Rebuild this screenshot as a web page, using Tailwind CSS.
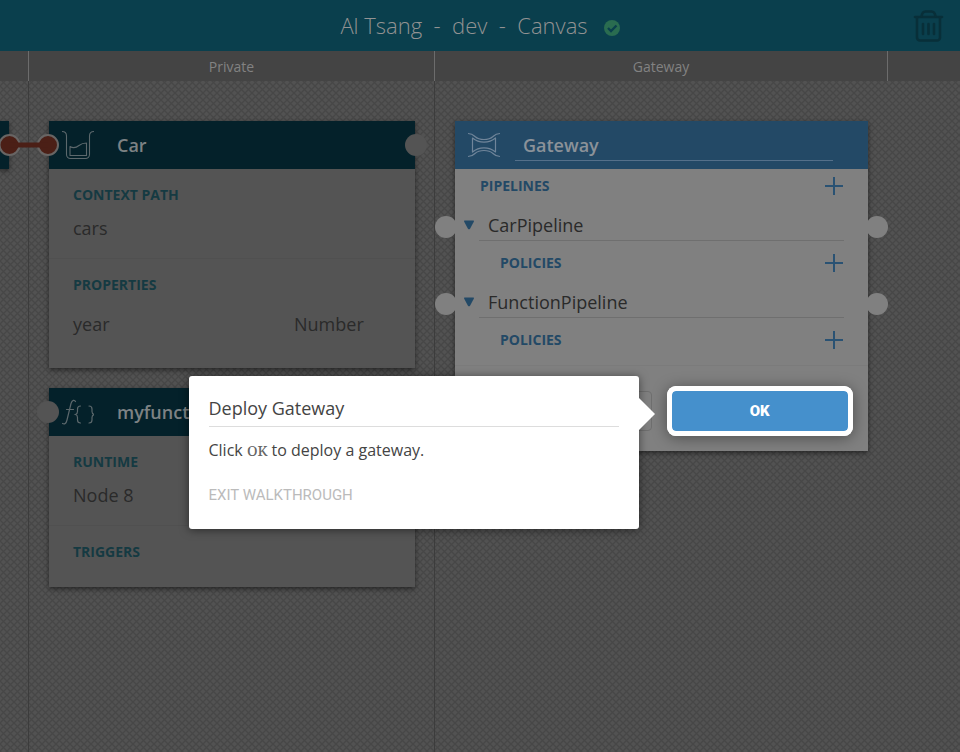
<!DOCTYPE html>
<html lang="en">
<head>
<meta charset="utf-8">
<meta name="viewport" content="width=device-width, initial-scale=1">
<title>Al Tsang - dev - Canvas</title>
<script src="https://cdn.jsdelivr.net/npm/@tailwindcss/browser@4"></script>
</head>
<body class="flex min-h-screen flex-col overflow-hidden bg-[#505050] font-['Open_Sans',sans-serif] text-[#2a2a2a]">

<header class="flex h-[51px] shrink-0 items-center bg-[#0a3f4d] px-4">
  <div class="flex-1"></div>
  <div class="flex items-center gap-4">
    <h1 class="text-[22px] font-light text-[#929292]">Al Tsang&nbsp; -&nbsp; dev&nbsp; -&nbsp; Canvas</h1>
    <svg class="mt-1 size-4" viewBox="0 0 16 16" role="img" aria-label="Saved">
      <circle cx="8" cy="8" r="8" fill="#2a6c50"/>
      <path d="M4 8l3 3 5.500-5.500" fill="none" stroke="#0a3f4d" stroke-width="2.300"/>
    </svg>
  </div>
  <div class="flex flex-1 justify-end">
    <button type="button" aria-label="Delete" class="text-[#082f39]">
      <svg class="h-8 w-8" viewBox="0 0 32 32" fill="none" stroke="currentColor" stroke-width="2.600" stroke-linecap="round">
        <path d="M3 7h27"/>
        <path d="M9.500 6.500C10 3 11.500 1.500 13.500 1.500h6c2 0 3.500 1.500 4 5"/>
        <path d="M5 8v19.500a3 3 0 0 0 3 3h17a3 3 0 0 0 3-3V8"/>
        <path d="M11 14v10M16.500 14v10M22 14v10"/>
      </svg>
    </button>
  </div>
</header>

<main class="relative grid flex-1 grid-cols-[28fr_406fr_453fr_73fr] grid-rows-[30px_1fr]">
  <svg class="absolute inset-0 h-full w-full" aria-hidden="true">
    <defs>
      <pattern id="weave" width="7" height="7" patternUnits="userSpaceOnUse">
        <rect width="7" height="7" fill="#525252"/>
        <path d="M-1-1l9 9M-1 8l9-9" stroke="#474747" stroke-width="1.400"/>
      </pattern>
    </defs>
    <rect width="100%" height="100%" fill="url(#weave)"/>
  </svg>

  <div class="relative bg-[#444]"></div>
  <h2 class="relative border-l border-[#6c6c6c] bg-[#444] text-center text-sm leading-8 text-[#828282]">Private</h2>
  <h2 class="relative border-l border-[#6c6c6c] bg-[#444] text-center text-sm leading-8 text-[#828282]">Gateway</h2>
  <div class="relative border-l border-[#6c6c6c] bg-[#444]"></div>

  <section class="relative pt-10">
    <div class="mr-[19px] h-12 bg-[#04212a] shadow-[0_2px_5px_rgba(0,0,0,0.5)]"></div>
  </section>

  <section class="relative flex flex-col gap-5 border-l border-[#3c3c3c] pt-10 pr-[19px] pl-5">
    <article class="relative bg-[#545454] shadow-[0_2px_5px_rgba(0,0,0,0.5)]">
      <header class="flex h-12 items-center bg-[#04212a] pl-[13px]">
        <svg class="h-8 w-8" viewBox="0 0 32 32" fill="none" stroke="#5c686c" stroke-width="1.100" stroke-linejoin="round">
          <path d="M0 2.500c3 0 4.500 1.500 4.500 4.500v18.500a4 4 0 0 0 4 4h15a4 4 0 0 0 4-4V7c0-3 1.500-4.500 4.500-4.500"/>
          <path d="M8 17.500c4 2.500 6.500 1 9-1s4.500-2.500 7.500-2.500v12.500H8z"/>
        </svg>
        <h3 class="ml-[23px] text-lg font-semibold text-[#7d8284]">Car</h3>
      </header>
      <div class="h-[90px] border-b border-[#505050] px-6 pt-4">
        <h4 class="text-sm font-bold text-[#153a42]">CONTEXT PATH</h4>
        <p class="mt-[9px] text-lg">cars</p>
      </div>
      <div class="h-[109px] px-6 pt-4">
        <h4 class="text-sm font-bold text-[#153a42]">PROPERTIES</h4>
        <p class="mt-[15px] grid grid-cols-[221fr_97fr] text-lg"><span>year</span><span>Number</span></p>
      </div>
      <span class="absolute top-[13px] -right-3 size-[22px] rounded-full bg-[#545454]"></span>
      <svg class="absolute top-3 -left-[51px] h-6 w-16" viewBox="0 0 64 24">
        <circle cx="11.500" cy="12" r="10" fill="#4b1f16" stroke="#686564" stroke-width="2"/>
        <circle cx="50" cy="12" r="10" fill="#4b1f16" stroke="#686564" stroke-width="2"/>
        <path d="M11 12h39" stroke="#4b1f16" stroke-width="5"/>
      </svg>
    </article>

    <article class="relative bg-[#545454] shadow-[0_2px_5px_rgba(0,0,0,0.5)]">
      <header class="flex h-12 items-center bg-[#04212a] pl-[13px]">
        <svg class="h-8 w-8" viewBox="0 0 32 32" fill="none" stroke="#5c686c" stroke-width="1.200" stroke-linecap="round">
          <path d="M13.500 5.500C12.500 3.500 10 4 9 7.500L5 24c-.8 3.500-2.500 4.500-4.500 3.500M4.500 13.500h7"/>
          <path d="M18.500 10c-2.500 0-3 1-3 3v2.500c0 1.500-.5 2.500-2 3 1.500.5 2 1.500 2 3V24c0 2 .5 3 3 3"/>
          <path d="M27 10c2.500 0 3 1 3 3v2.500c0 1.500.5 2.500 2 3-1.500.5-2 1.500-2 3V24c0 2-.5 3-3 3"/>
        </svg>
        <h3 class="ml-[23px] text-lg font-semibold text-[#7d8284]">myfunction</h3>
      </header>
      <div class="h-[90px] border-b border-[#505050] px-6 pt-4">
        <h4 class="text-sm font-bold text-[#153a42]">RUNTIME</h4>
        <p class="mt-[9px] text-lg">Node 8</p>
      </div>
      <div class="h-[61px] px-6 pt-4">
        <h4 class="text-sm font-bold text-[#153a42]">TRIGGERS</h4>
      </div>
      <span class="absolute top-[13px] -left-3 size-[22px] rounded-full bg-[#545454]"></span>
    </article>
  </section>

  <section class="relative border-l border-[#3c3c3c] pt-10 pr-[19px] pl-5">
    <article class="relative bg-[#808080] shadow-[0_2px_5px_rgba(0,0,0,0.5)]">
      <header class="flex h-12 items-center bg-[#234966] pr-[35px] pl-[13px]">
        <svg class="h-8 w-8 shrink-0" viewBox="0 0 32 32" fill="none" stroke="#70859a" stroke-width="1.200" stroke-linejoin="round">
          <path d="M0 4.500c4 0 5 1 7 3 4.500 4 13.500 4 18 0 2-2 3-3 7-3"/>
          <path d="M0 27.500c4 0 5-1 7-3 4.500-4 13.500-4 18 0 2 2 3 3 7 3"/>
          <path d="M4.500 9c6.500 5.500 16.500 5.500 23 0v14c-6.500-5.500-16.500-5.500-23 0z"/>
        </svg>
        <input aria-label="Gateway name" value="Gateway" class="ml-[15px] h-8 min-w-0 flex-1 border-b border-[#54708a] px-2 text-lg font-semibold text-[#8b9299]">
      </header>

      <div class="flex h-[34px] items-center justify-between pr-6 pl-[25px]">
        <h4 class="text-sm font-bold text-[#234966]">PIPELINES</h4>
        <button type="button" aria-label="Add pipeline" class="text-[#2a5273]"><svg class="size-5" viewBox="0 0 20 20" stroke="currentColor" stroke-width="2"><path d="M1 10h18M10 1v18"/></svg></button>
      </div>

      <div class="relative flex h-[38px] items-stretch pr-6 pl-2">
        <button type="button" aria-label="Collapse CarPipeline" class="mr-1 w-3 text-[#234966]"><svg class="mt-1.5 h-3 w-3" viewBox="0 0 12 12" fill="currentColor"><path d="M1.800 1.500h8.400q1.300 0 .6 1.300L7.200 9.400Q6 11.200 4.800 9.400L1.200 2.800Q.5 1.500 1.800 1.500z"/></svg></button>
        <input aria-label="Pipeline name" value="CarPipeline" class="min-w-0 flex-1 border-b border-[#6f6f6f] pt-1.5 pl-[9px] text-lg">
        <span class="absolute top-[13px] -left-5 size-[22px] rounded-full bg-[#808080]"></span>
        <span class="absolute top-[13px] -right-5 size-[22px] rounded-full bg-[#808080]"></span>
      </div>
      <div class="flex h-[39px] items-center justify-between pt-[5px] pr-6 pl-[45px]">
        <h4 class="text-sm font-bold text-[#234966]">POLICIES</h4>
        <button type="button" aria-label="Add policy" class="text-[#2a5273]"><svg class="size-5" viewBox="0 0 20 20" stroke="currentColor" stroke-width="2"><path d="M1 10h18M10 1v18"/></svg></button>
      </div>

      <div class="relative flex h-[38px] items-stretch pr-6 pl-2">
        <button type="button" aria-label="Collapse FunctionPipeline" class="mr-1 w-3 text-[#234966]"><svg class="mt-1.5 h-3 w-3" viewBox="0 0 12 12" fill="currentColor"><path d="M1.800 1.500h8.400q1.300 0 .6 1.300L7.200 9.400Q6 11.200 4.800 9.400L1.200 2.800Q.5 1.500 1.800 1.500z"/></svg></button>
        <input aria-label="Pipeline name" value="FunctionPipeline" class="min-w-0 flex-1 border-b border-[#6f6f6f] pt-1.5 pl-[9px] text-lg">
        <span class="absolute top-[13px] -left-5 size-[22px] rounded-full bg-[#808080]"></span>
        <span class="absolute top-[13px] -right-5 size-[22px] rounded-full bg-[#808080]"></span>
      </div>
      <div class="flex h-[39px] items-center justify-between pt-[5px] pr-6 pl-[45px]">
        <h4 class="text-sm font-bold text-[#234966]">POLICIES</h4>
        <button type="button" aria-label="Add policy" class="text-[#2a5273]"><svg class="size-5" viewBox="0 0 20 20" stroke="currentColor" stroke-width="2"><path d="M1 10h18M10 1v18"/></svg></button>
      </div>

      <footer class="mt-2 grid grid-cols-2 gap-5 border-t border-[#7b7b7b] px-5 pt-[25px] pb-5">
        <button type="button" class="h-10 rounded-sm border border-[#6f6f6f] text-sm font-bold text-[#4a4a4a]">CANCEL</button>
        <div class="relative">
          <button type="button" class="h-10 w-full rounded-sm bg-[#4590cc] font-['Roboto',sans-serif] text-[15px] font-black text-white shadow-[0_0_0_5px_#fff,0_2px_15px_5px_rgba(0,0,0,0.4)] outline-5 outline-white">OK</button>
          <div role="dialog" aria-labelledby="tour-title" class="absolute -top-[15px] right-[calc(100%+33px)] w-[450px] rounded-[3px] bg-white px-5 pt-5 pb-[22px] text-[#444] shadow-[0_1px_10px_rgba(0,0,0,0.5)]">
            <h2 id="tour-title" class="border-b border-[#ddd] pb-1.5 text-lg leading-6">Deploy Gateway</h2>
            <p class="mt-[11px] text-base leading-6">Click <code class="font-['Noto_Serif','DejaVu_Serif',serif] text-sm font-medium text-[#666]">OK</code> to deploy a gateway.</p>
            <button type="button" class="mt-[21px] block font-['Roboto',sans-serif] text-[15px] leading-6 text-[#bbb]">EXIT WALKTHROUGH</button>
            <svg class="absolute top-[22px] left-full h-8 w-4" viewBox="0 0 16 32" fill="#fff"><path d="M0 0l16 16L0 32z"/></svg>
          </div>
        </div>
      </footer>
    </article>
  </section>

  <section class="border-l border-[#3c3c3c]"></section>
</main>
</body>
</html>
